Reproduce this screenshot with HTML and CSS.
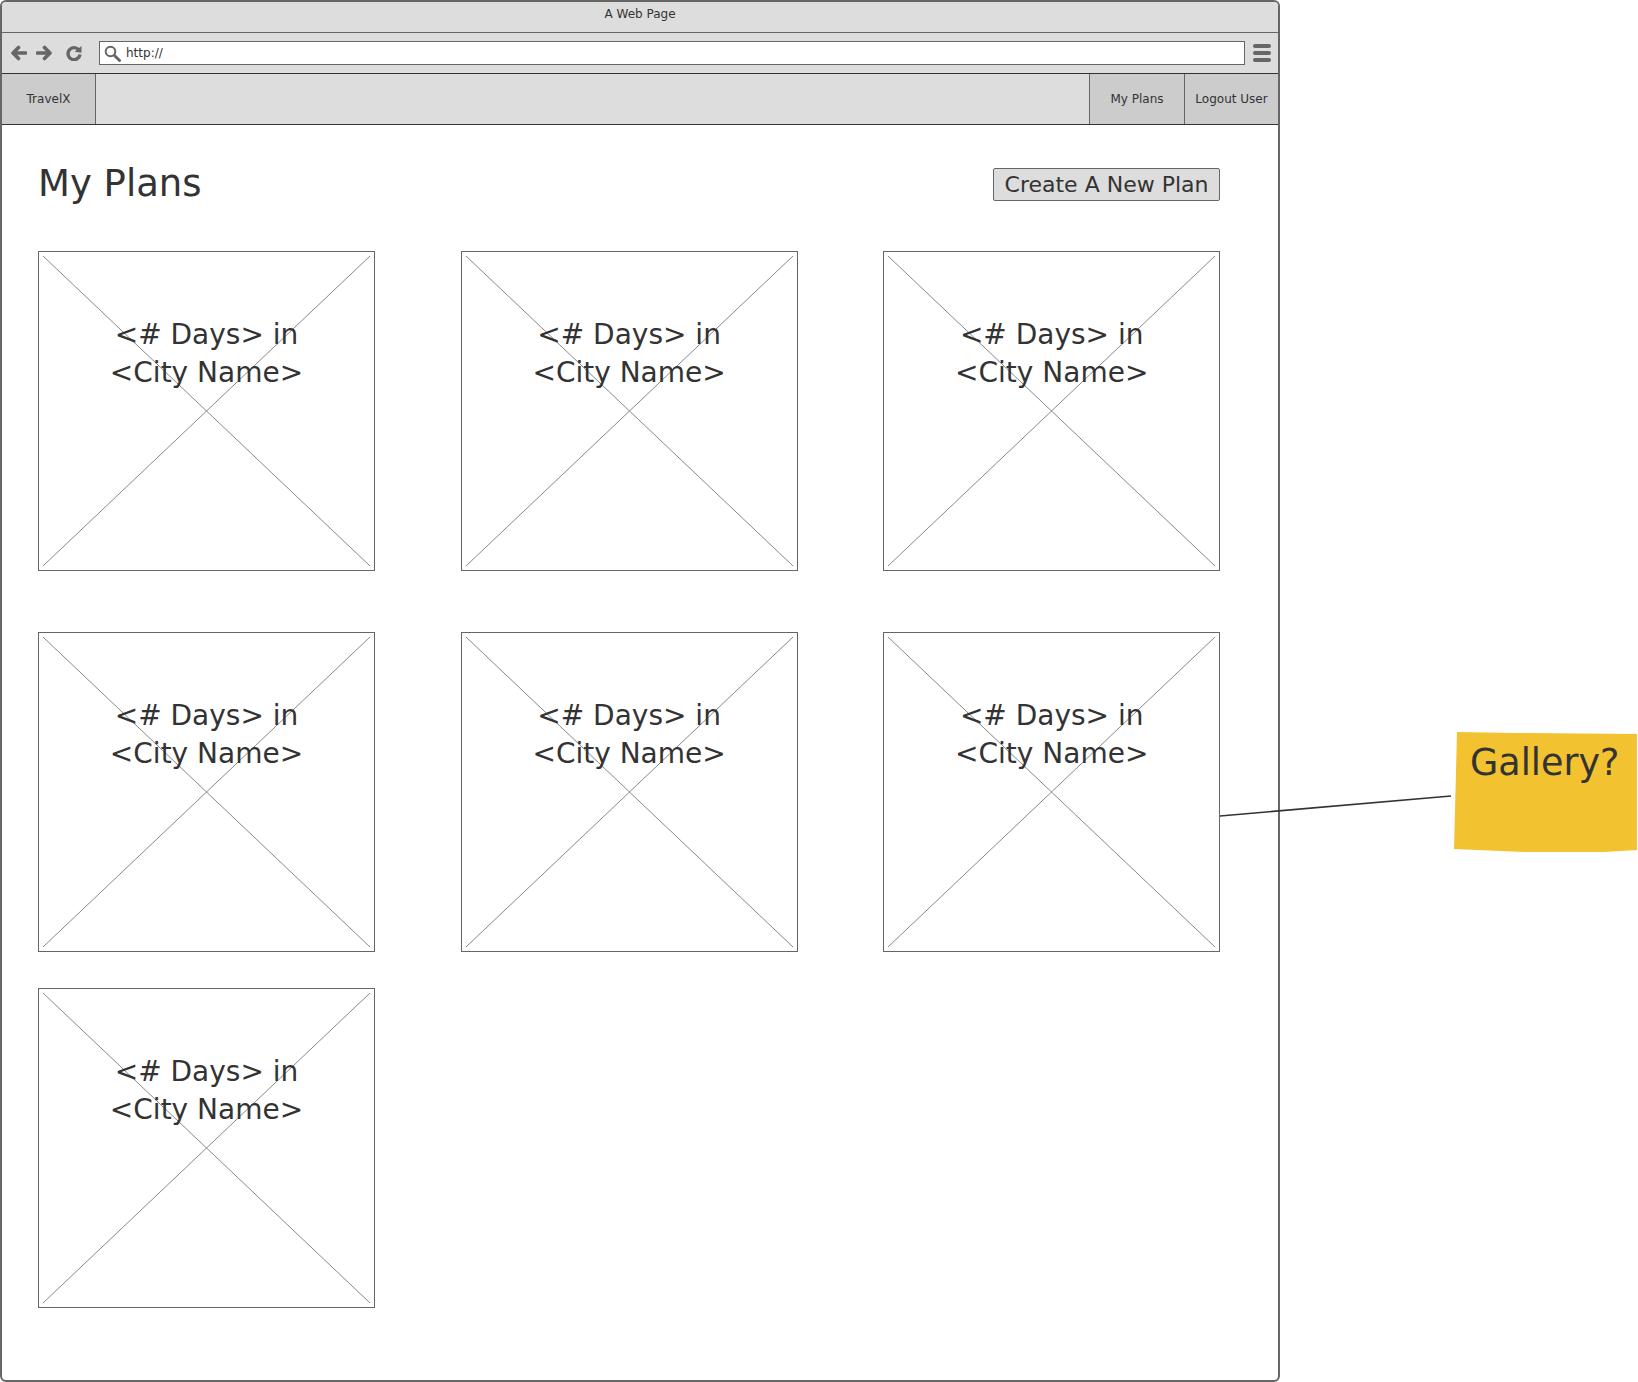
FILE: index.html
```html
<!DOCTYPE html>
<html lang="en">
<head>
    <meta charset="UTF-8">
    <title>A Web Page</title>
    <link rel="stylesheet" href="styles.css">
</head>
<body>
    <div class="browser">
        <div class="title-bar">A Web Page</div>
        <div class="tool-bar">
            <svg class="tool-icon" width="16" height="16" viewBox="0 0 16 16"><path d="M7.5 2.5 2 8l5.5 5.5M3 8h11.5" fill="none" stroke="#666" stroke-width="3.6" stroke-linecap="round" stroke-linejoin="round"/></svg>
            <svg class="tool-icon" width="16" height="16" viewBox="0 0 16 16"><path d="M8.500 2.500 14 8l-5.500 5.500M13 8H1.500" fill="none" stroke="#666" stroke-width="3.6" stroke-linecap="round" stroke-linejoin="round"/></svg>
            <svg class="tool-icon reload" width="16" height="16" viewBox="0 0 16 16"><path d="M12.500 4.600A6 6 0 1 0 14 9.500" fill="none" stroke="#666" stroke-width="3.400"/><path d="M8.500 6.800 15.500 1v6.800z" fill="#666"/></svg>
            <div class="address">
                <svg width="17" height="17" viewBox="0 0 17 17"><circle cx="6.500" cy="6.500" r="4.800" fill="none" stroke="#666" stroke-width="2"/><path d="m10.500 10.500 5 5" stroke="#666" stroke-width="3" stroke-linecap="round"/></svg>
                <span>http://</span>
            </div>
            <div class="menu-icon"><i></i><i></i><i></i></div>
        </div>
        <div class="nav">
            <div class="nav-item brand">TravelX</div>
            <div class="nav-space"></div>
            <div class="nav-item plans">My Plans</div>
            <div class="nav-item logout">Logout User</div>
        </div>
        <div class="content">
            <div class="head">
                <h1>My Plans</h1>
                <button class="new-plan">Create A New Plan</button>
            </div>
            <div class="plan-grid">
                <div class="plan"><svg class="cross" viewBox="0 0 100 100" preserveAspectRatio="none"><path d="M0 0 100 100M100 0 0 100" vector-effect="non-scaling-stroke"/></svg><p>&lt;# Days&gt; in<br>&lt;City Name&gt;</p></div>
                <div class="plan"><svg class="cross" viewBox="0 0 100 100" preserveAspectRatio="none"><path d="M0 0 100 100M100 0 0 100" vector-effect="non-scaling-stroke"/></svg><p>&lt;# Days&gt; in<br>&lt;City Name&gt;</p></div>
                <div class="plan"><svg class="cross" viewBox="0 0 100 100" preserveAspectRatio="none"><path d="M0 0 100 100M100 0 0 100" vector-effect="non-scaling-stroke"/></svg><p>&lt;# Days&gt; in<br>&lt;City Name&gt;</p></div>
                <div class="plan"><svg class="cross" viewBox="0 0 100 100" preserveAspectRatio="none"><path d="M0 0 100 100M100 0 0 100" vector-effect="non-scaling-stroke"/></svg><p>&lt;# Days&gt; in<br>&lt;City Name&gt;</p></div>
                <div class="plan"><svg class="cross" viewBox="0 0 100 100" preserveAspectRatio="none"><path d="M0 0 100 100M100 0 0 100" vector-effect="non-scaling-stroke"/></svg><p>&lt;# Days&gt; in<br>&lt;City Name&gt;</p></div>
                <div class="plan"><svg class="cross" viewBox="0 0 100 100" preserveAspectRatio="none"><path d="M0 0 100 100M100 0 0 100" vector-effect="non-scaling-stroke"/></svg><p>&lt;# Days&gt; in<br>&lt;City Name&gt;</p></div>
            </div>
            <div class="plan-grid last-row">
                <div class="plan"><svg class="cross" viewBox="0 0 100 100" preserveAspectRatio="none"><path d="M0 0 100 100M100 0 0 100" vector-effect="non-scaling-stroke"/></svg><p>&lt;# Days&gt; in<br>&lt;City Name&gt;</p></div>
            </div>
        </div>
    </div>
    <svg class="connector" width="240" height="30" viewBox="0 0 240 30"><path d="M0 26 231 6" stroke="#333" stroke-width="1.6" fill="none"/></svg>
    <div class="note">Gallery?</div>
</body>
</html>
```

FILE: styles.css
```css
* {
    box-sizing: border-box;
}
body {
    margin: 0;
    background-color: white;
    font-family: "DejaVu Sans", "Open Sans", sans-serif;
    color: #333;
}
.browser {
    width: 1280px;
    height: 1382px;
    border: 2px solid #666;
    border-radius: 6px;
    overflow: hidden;
}
.title-bar {
    height: 31px;
    background-color: #dddddd;
    border-bottom: 1px solid #666;
    text-align: center;
    font-size: 12px;
    line-height: 24px;
}
.tool-bar {
    height: 40px;
    background-color: #dddddd;
    display: flex;
    align-items: center;
    padding: 0 7px 0 9px;
    gap: 9px;
}
.reload {
    margin-left: 5px;
}
.address {
    flex: 1;
    height: 24px;
    margin-left: 8px;
    background-color: white;
    border: 1px solid #666;
    display: flex;
    align-items: center;
    gap: 5px;
    padding-left: 4px;
    font-size: 12px;
}
.menu-icon {
    width: 18px;
    margin-left: -1px;
    display: flex;
    flex-direction: column;
    gap: 3px;
}
.menu-icon i {
    height: 4px;
    background-color: #666;
    border-radius: 2px;
}
.nav {
    height: 52px;
    background-color: #dddddd;
    border-top: 1px solid #333;
    border-bottom: 1px solid #333;
    display: flex;
    font-size: 12px;
}
.nav-item {
    background-color: #cccccc;
    display: flex;
    align-items: center;
    justify-content: center;
}
.brand {
    width: 94px;
    border-right: 1px solid #666;
}
.nav-space {
    flex: 1;
}
.plans {
    width: 95px;
    border-left: 1px solid #666;
}
.logout {
    width: 94px;
    border-left: 1px solid #666;
}
.content {
    padding: 0 58px 0 36px;
}
.head {
    height: 126px;
    display: flex;
    justify-content: space-between;
    align-items: flex-start;
}
h1 {
    margin: 35px 0 0;
    font-size: 37px;
    line-height: 48px;
    font-weight: 400;
}
.new-plan {
    margin: 43px 0 0;
    width: 227px;
    height: 33px;
    padding: 0;
    background-color: #dddddd;
    border: 1px solid #666;
    border-radius: 2px;
    font-family: inherit;
    font-size: 22px;
    color: #333;
}
.plan-grid {
    display: grid;
    grid-template-columns: repeat(3, 337px);
    column-gap: 85.6px;
    row-gap: 61px;
}
.last-row {
    margin-top: 36px;
}
.plan {
    position: relative;
    height: 320px;
    border: 1px solid #666;
    background-color: white;
}
.cross {
    position: absolute;
    top: 4px;
    left: 4px;
    width: 327px;
    height: 310px;
}
.cross path {
    stroke: #888;
    stroke-width: 1;
    fill: none;
}
.plan p {
    position: relative;
    margin: 64px 0 0;
    text-align: center;
    font-size: 28px;
    line-height: 38px;
}
.connector {
    position: absolute;
    left: 1220px;
    top: 790px;
}
.note {
    position: absolute;
    left: 1454px;
    top: 732px;
    width: 184px;
    height: 120px;
    background-color: #f2c230;
    clip-path: polygon(3px 0, 60px 1px, 183px 2px, 183px 118px, 150px 120px, 70px 120px, 0 117px);
    padding: 7px 0 0 16px;
    font-size: 36.5px;
    line-height: 48px;
}
```
